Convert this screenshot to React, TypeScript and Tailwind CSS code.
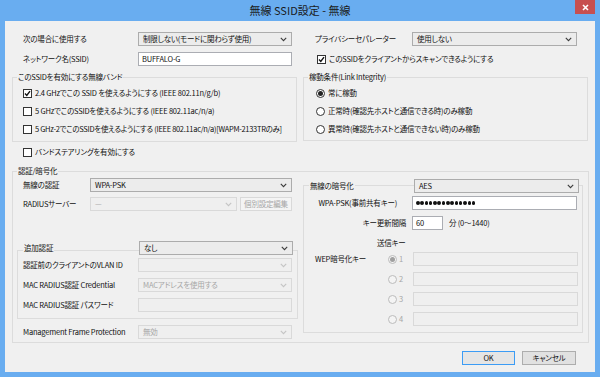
import React from "react";

const FONT = { fontFamily: '"Noto Sans CJK JP", "Noto Sans", sans-serif' };

function Chevron({ disabled }: { disabled?: boolean }) {
  return (
    <svg width="7" height="5" viewBox="0 0 7 5" className="shrink-0">
      <polyline
        points="0.8,0.8 3.5,3.6 6.2,0.8"
        fill="none"
        stroke={disabled ? "#c4c4c4" : "#3c3c3c"}
        strokeWidth="1.1"
      />
    </svg>
  );
}

function Sel({ w, text, disabled }: { w: string; text?: string; disabled?: boolean }) {
  return (
    <div
      className={`${w} h-[14px] shrink-0 flex items-center justify-between pl-[4px] pr-[4px] border ${
        disabled ? "border-[#d9d9d9] bg-[#efefef] text-[#a6a6a6]" : "border-[#acacac] bg-[#ececec] text-[#111]"
      }`}
    >
      <span className="whitespace-nowrap leading-[12px]">{text}</span>
      <Chevron disabled={disabled} />
    </div>
  );
}

function Inp({ w, text, disabled, children }: { w: string; text?: string; disabled?: boolean; children?: React.ReactNode }) {
  return (
    <div
      className={`${w} h-[14px] shrink-0 flex items-center pl-[3px] border ${
        disabled ? "border-[#d9d9d9] bg-[#efefef]" : "border-[#abadb3] bg-white"
      }`}
    >
      {children ?? <span className="whitespace-nowrap leading-[12px] text-[#111]">{text}</span>}
    </div>
  );
}

function Check({ checked }: { checked?: boolean }) {
  return (
    <div className="w-[9px] h-[9px] shrink-0 border border-[#333] bg-white flex items-center justify-center">
      {checked && (
        <svg width="7" height="7" viewBox="0 0 7 7">
          <polyline points="1,3.6 2.8,5.4 6,1.2" fill="none" stroke="#111" strokeWidth="1.4" />
        </svg>
      )}
    </div>
  );
}

function Radio({ checked, disabled }: { checked?: boolean; disabled?: boolean }) {
  return (
    <div
      className={`w-[9px] h-[9px] shrink-0 rounded-full border flex items-center justify-center ${
        disabled ? "border-[#bcbcbc] bg-[#f4f4f4]" : "border-[#333] bg-white"
      }`}
    >
      {checked && <div className={`w-[5px] h-[5px] rounded-full ${disabled ? "bg-[#a0a0a0]" : "bg-[#222]"}`} />}
    </div>
  );
}

function Caption({ children }: { children: React.ReactNode }) {
  return (
    <span className="absolute left-[4px] top-[-6px] h-[10px] leading-[10px] px-[1px] bg-[#f0f0f0] whitespace-nowrap">
      {children}
    </span>
  );
}

export default function App() {
  return (
    <div
      className="w-[600px] h-[377px] bg-[#69adf0] flex flex-col text-[7.5px] text-[#111] overflow-hidden [font-feature-settings:'palt'] tracking-[-0.2px]"
      style={FONT}
    >
      {/* title bar */}
      <div className="h-[21px] flex shrink-0">
        <div className="w-[25px]" />
        <div className="flex-1 flex items-center justify-center text-[11px] text-[#1a1a1a] leading-none tracking-normal">
          無線 SSID設定 - 無線
        </div>
        <div className="w-[20px] h-[14px] mr-[5px] bg-[#c75050] flex items-center justify-center">
          <svg width="7" height="7" viewBox="0 0 7 7">
            <path d="M1 1 L6 6 M6 1 L1 6" stroke="white" strokeWidth="1.6" />
          </svg>
        </div>
      </div>

      {/* client */}
      <div className="ml-[5px] w-[590px] h-[351px] bg-[#f0f0f0] flex flex-col">
        {/* top section */}
        <div className="flex pl-[7px] pt-[11px] gap-[6px]">
          {/* left column */}
          <div className="w-[285px] flex flex-col">
            <div className="flex items-center h-[14px]">
              <span className="w-[126px] pl-[11px] whitespace-nowrap">次の場合に使用する</span>
              <Sel w="w-[154px]" text="制限しない(モードに関わらず使用)" />
            </div>
            <div className="flex items-center h-[14px] mt-[6px]">
              <span className="w-[126px] pl-[11px] whitespace-nowrap">ネットワーク名(SSID)</span>
              <Inp w="w-[154px]" text="BUFFALO-G" />
            </div>
            <div className="relative mt-[11px] h-[65px] border border-[#dcdcdc] pt-[9px] pl-[10px] flex flex-col gap-[6px]">
              <Caption>このSSIDを有効にする無線バンド</Caption>
              <div className="flex items-center h-[12px] gap-[3px]">
                <Check checked />
                <span className="whitespace-nowrap">2.4 GHzでこの SSID を使えるようにする (IEEE 802.11n/g/b)</span>
              </div>
              <div className="flex items-center h-[12px] gap-[3px]">
                <Check />
                <span className="whitespace-nowrap">5 GHzでこのSSIDを使えるようにする (IEEE 802.11ac/n/a)</span>
              </div>
              <div className="flex items-center h-[12px] gap-[3px]">
                <Check />
                <span className="whitespace-nowrap tracking-[-0.3px]">5 GHz-2でこのSSIDを使えるようにする (IEEE 802.11ac/n/a)[WAPM-2133TRのみ]</span>
              </div>
            </div>
            <div className="flex items-center h-[12px] gap-[3px] mt-[4px] pl-[11px]">
              <Check />
              <span className="whitespace-nowrap">バンドステアリングを有効にする</span>
            </div>
          </div>

          {/* right column */}
          <div className="w-[285px] flex flex-col">
            <div className="flex items-center h-[14px]">
              <span className="w-[109px] pl-[12px] whitespace-nowrap">プライバシーセパレーター</span>
              <Sel w="w-[165px]" text="使用しない" />
            </div>
            <div className="flex items-center h-[12px] mt-[7px] pl-[14px] gap-[3px]">
              <Check checked />
              <span className="whitespace-nowrap">このSSIDをクライアントからスキャンできるようにする</span>
            </div>
            <div className="relative mt-[12px] h-[64px] border border-[#dcdcdc] pt-[9px] pl-[12px] flex flex-col gap-[6px]">
              <Caption>稼動条件(Link Integrity)</Caption>
              <div className="flex items-center h-[12px] gap-[3px]">
                <Radio checked />
                <span className="whitespace-nowrap">常に稼動</span>
              </div>
              <div className="flex items-center h-[12px] gap-[3px]">
                <Radio />
                <span className="whitespace-nowrap">正常時(確認先ホストと通信できる時)のみ稼動</span>
              </div>
              <div className="flex items-center h-[12px] gap-[3px]">
                <Radio />
                <span className="whitespace-nowrap">異常時(確認先ホストと通信できない時)のみ稼動</span>
              </div>
            </div>
          </div>
        </div>

        {/* auth / encryption group */}
        <div className="relative ml-[7px] mt-[13px] w-[577px] h-[172px] border border-[#dcdcdc] flex">
          <Caption>認証/暗号化</Caption>
          {/* left part */}
          <div className="w-[285px] flex flex-col pt-[6px]">
            <div className="flex items-center h-[14px]">
              <span className="w-[77px] pl-[10px] whitespace-nowrap">無線の認証</span>
              <Sel w="w-[202px]" text="WPA-PSK" />
            </div>
            <div className="flex items-center h-[14px] mt-[5px]">
              <span className="w-[77px] pl-[10px] whitespace-nowrap">RADIUSサーバー</span>
              <Sel w="w-[147px]" text="—" disabled />
              <div className="ml-[3px] w-[52px] h-[14px] border border-[#d9d9d9] bg-[#f4f4f4] text-[#a6a6a6] flex items-center justify-center whitespace-nowrap">
                個別設定編集
              </div>
            </div>

            <div className="relative ml-[4px] mt-[39px] w-[281px] h-[69px] border border-[#dcdcdc] pt-[7px] flex flex-col gap-[6px]">
              <div className="absolute left-[5px] top-[-10px] w-[270px] flex items-center justify-between">
                <span className="bg-[#f0f0f0] px-[1px] leading-[10px] whitespace-nowrap">追加認証</span>
                <Sel w="w-[154px]" text="なし" />
              </div>
              <div className="flex items-center h-[14px]">
                <span className="w-[120px] pl-[5px] whitespace-nowrap">認証前のクライアントのVLAN ID</span>
                <Sel w="w-[154px]" disabled />
              </div>
              <div className="flex items-center h-[14px]">
                <span className="w-[120px] pl-[5px] whitespace-nowrap">MAC RADIUS認証 Credential</span>
                <Sel w="w-[154px]" text="MACアドレスを使用する" disabled />
              </div>
              <div className="flex items-center h-[14px]">
                <span className="w-[120px] pl-[5px] whitespace-nowrap">MAC RADIUS認証 パスワード</span>
                <Inp w="w-[154px]" disabled />
              </div>
            </div>

            <div className="flex items-center h-[14px] mt-[6px]">
              <span className="w-[125px] pl-[10px] whitespace-nowrap">Management Frame Protection</span>
              <Sel w="w-[154px]" text="無効" disabled />
            </div>
          </div>

          {/* right part: encryption */}
          <div className="relative ml-[5px] mt-[13px] w-[280px] h-[148px] border border-[#dcdcdc] pt-[10px] flex flex-col">
            <div className="absolute left-[5px] top-[-7px] w-[270px] flex items-center justify-between">
              <span className="bg-[#f0f0f0] px-[1px] leading-[10px] whitespace-nowrap">無線の暗号化</span>
              <Sel w="w-[165px]" text="AES" />
            </div>
            <div className="flex items-center h-[14px]">
              <span className="w-[93px] text-right whitespace-nowrap">WPA-PSK(事前共有キー)</span>
              <div className="ml-[15px]">
                <Inp w="w-[165px]">
                  <div className="flex gap-[0.8px]">
                    {Array.from({ length: 14 }).map((_, i) => (
                      <div key={i} className="w-[3.5px] h-[3.5px] rounded-full bg-[#111]" />
                    ))}
                  </div>
                </Inp>
              </div>
            </div>
            <div className="flex items-center h-[14px] mt-[6px]">
              <span className="w-[102px] text-right whitespace-nowrap">キー更新間隔</span>
              <div className="ml-[6px]">
                <Inp w="w-[31px]" text="60" />
              </div>
              <span className="ml-[6px] whitespace-nowrap">分 (0〜1440)</span>
            </div>
            <div className="h-[10px] leading-[10px] mt-[8px] pl-[73px] whitespace-nowrap">送信キー</div>
            <div className="flex flex-col gap-[6px] mt-[4px]">
              {[1, 2, 3, 4].map((n) => (
                <div key={n} className="flex items-center h-[14px]">
                  <span className="w-[84px] pl-[11px] whitespace-nowrap">{n === 1 ? "WEP暗号化キー" : ""}</span>
                  <Radio checked={n === 1} disabled />
                  <span className="ml-[2px] w-[14px] text-[#a6a6a6]">{n}</span>
                  <Inp w="w-[165px]" disabled />
                </div>
              ))}
            </div>
          </div>
        </div>

        {/* buttons */}
        <div className="flex justify-end gap-[7px] pr-[19px] mt-[8px]">
          <div className="w-[53px] h-[14px] border border-[#3c9cf5] bg-[#e5e5e5] flex items-center justify-center">OK</div>
          <div className="w-[54px] h-[14px] border border-[#adadad] bg-[#e1e1e1] flex items-center justify-center">キャンセル</div>
        </div>
      </div>
    </div>
  );
}
